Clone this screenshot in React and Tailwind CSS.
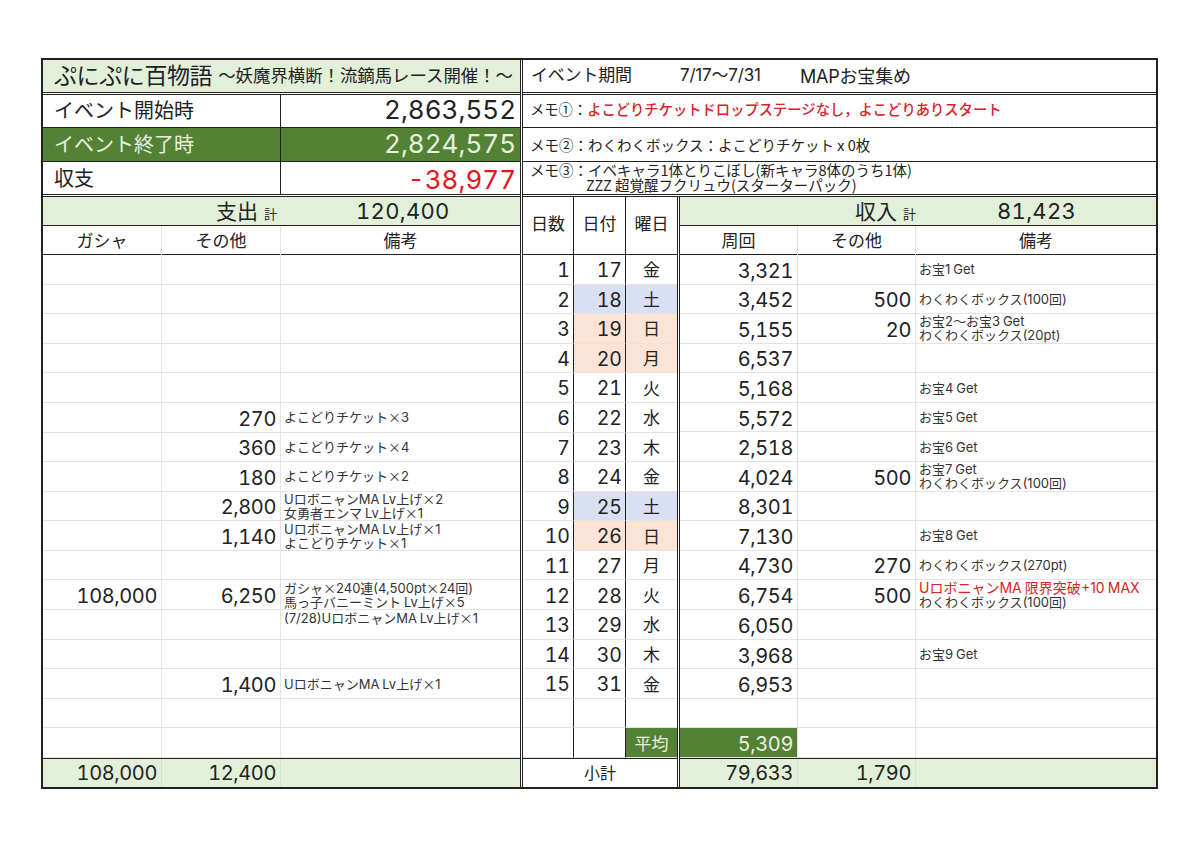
const font = { fontFamily: '"Inter", "Noto Sans CJK JP", sans-serif' };
const cjk = { fontFamily: '"Noto Sans CJK JP", "Inter", sans-serif' };

const leftRows = [
  {}, {}, {}, {}, {},
  { other: "270", note: "よこどりチケット×3" },
  { other: "360", note: "よこどりチケット×4" },
  { other: "180", note: "よこどりチケット×2" },
  { other: "2,800", note: ["UロボニャンMA Lv上げ×2", "女勇者エンマ Lv上げ×1"] },
  { other: "1,140", note: ["UロボニャンMA Lv上げ×1", "よこどりチケット×1"] },
  {},
  { gacha: "108,000", other: "6,250", note: ["ガシャ×240連(4,500pt×24回)", "馬っ子バニーミント Lv上げ×5"] },
  { note: "(7/28)UロボニャンMA Lv上げ×1", top: true },
  {},
  { other: "1,400", note: "UロボニャンMA Lv上げ×1" },
  {},
  {},
];

const days = [
  ["1", "17", "金"],
  ["2", "18", "土", "sat"],
  ["3", "19", "日", "sun"],
  ["4", "20", "月", "sun"],
  ["5", "21", "火"],
  ["6", "22", "水"],
  ["7", "23", "木"],
  ["8", "24", "金"],
  ["9", "25", "土", "sat"],
  ["10", "26", "日", "sun"],
  ["11", "27", "月"],
  ["12", "28", "火"],
  ["13", "29", "水"],
  ["14", "30", "木"],
  ["15", "31", "金"],
  ["", "", ""],
  ["", "", "平均", "avg"],
];

const rightRows = [
  { laps: "3,321", note: "お宝1 Get" },
  { laps: "3,452", other: "500", note: "わくわくボックス(100回)" },
  { laps: "5,155", other: "20", note: ["お宝2〜お宝3 Get", "わくわくボックス(20pt)"] },
  { laps: "6,537" },
  { laps: "5,168", note: "お宝4 Get" },
  { laps: "5,572", note: "お宝5 Get" },
  { laps: "2,518", note: "お宝6 Get" },
  { laps: "4,024", other: "500", note: ["お宝7 Get", "わくわくボックス(100回)"] },
  { laps: "8,301" },
  { laps: "7,130", note: "お宝8 Get" },
  { laps: "4,730", other: "270", note: "わくわくボックス(270pt)" },
  { laps: "6,754", other: "500", note: ["UロボニャンMA 限界突破+10 MAX", "わくわくボックス(100回)"], red: true },
  { laps: "6,050" },
  { laps: "3,968", note: "お宝9 Get" },
  { laps: "6,953" },
  {},
  { laps: "5,309", avg: true },
];

// latin runs get the wider face, kana and the full-width × stay in the CJK one
const Mixed = ({ text }) =>
  text.split(/([A-Za-z0-9,+/().]+)/).map((part, i) =>
    i % 2 ? <span key={i} style={font}>{part}</span> : part
  );

const Num = ({ children, className = "" }) => (
  <div className={`flex items-center justify-end pr-[4px] pt-[3px] text-[20px] leading-none tabular-nums tracking-[-0.4px] border-r border-b border-[#e4e4e4] ${className}`}>
    {children}
  </div>
);

const Note = ({ note, top, red }) => {
  const lines = Array.isArray(note) ? note : note ? [note] : [];
  return (
    <div
      className={`flex flex-col pl-[3px] border-b border-[#e4e4e4] text-[13px] leading-[14px] text-[#333] ${top ? "justify-start pt-[1px]" : "justify-center"}`}
      style={cjk}
    >
      {lines.map((l, i) => (
        <div key={i} className={`whitespace-nowrap ${red && i === 0 ? "text-[#d9222a] text-[14px]" : ""}`}>
          <Mixed text={l} />
        </div>
      ))}
    </div>
  );
};

const dayBg = { sat: "bg-[#d9e0f2]", sun: "bg-[#fbe4d5]", avg: "bg-[#548235] text-[#e8f0e0]" };

const bigNum = "flex items-center justify-end pr-[4px] pb-[2px] text-[26px] leading-none tabular-nums";
const bigLabel = "flex items-center pl-[11px] text-[20px] leading-none border-r border-[#222]";

export default function App() {
  return (
    <div className="w-[1200px] h-[848px] bg-white pt-[58px] pl-[41px] text-[#222]" style={font}>
      <div className="w-[1117px] h-[731px] border-2 border-[#222] flex">
        {/* left half */}
        <div className="w-[477px] flex flex-col">
          <div className="h-[32px] bg-[#e2efd9] flex items-center pl-[11px] whitespace-nowrap">
            <span className="text-[23px] tracking-[-0.4px]">ぷにぷに百物語</span>
            <span className="text-[17.4px] ml-[6px]">〜妖魔界横断！流鏑馬レース開催！〜</span>
          </div>
          <div className="h-[3px] border-y border-[#222]" />
          <div className="h-[33px] grid grid-cols-[238px_1fr] border-b border-[#222]">
            <div className={bigLabel}>イベント開始時</div>
            <div className={bigNum}>2,863,552</div>
          </div>
          <div className="h-[34px] grid grid-cols-[238px_1fr] border-b border-[#222] bg-[#548235] text-[#e8f0e0]">
            <div className={bigLabel}>イベント終了時</div>
            <div className={bigNum}>2,824,575</div>
          </div>
          <div className="h-[32px] grid grid-cols-[238px_1fr]">
            <div className={`${bigLabel} pt-[2px]`}>収支</div>
            <div className="flex items-center justify-end pr-[4px] pt-[3px] text-[26px] leading-none tabular-nums text-[#e8141c]">-38,977</div>
          </div>
          <div className="h-[3px] border-y border-[#222]" />
          <div className="h-[29px] bg-[#e2efd9] border-b border-[#222] grid grid-cols-[238px_1fr] items-center">
            <div className="text-right pr-[4px] text-[21px] leading-none">支出 <span className="text-[13px]">計</span></div>
            <div className="pl-[75px] text-[22px] leading-none tabular-nums tracking-[0.3px]">120,400</div>
          </div>
          <div className="h-[29px] grid grid-cols-[119px_119px_1fr] border-b border-[#222] text-[17px] text-center">
            <div className="border-r border-[#e4e4e4] flex items-center justify-center pt-[3px]">ガシャ</div>
            <div className="border-r border-[#e4e4e4] flex items-center justify-center pt-[3px]">その他</div>
            <div className="flex items-center justify-center pt-[3px]">備考</div>
          </div>
          <div className="h-[503px] grid grid-cols-[119px_119px_1fr] grid-rows-[repeat(17,1fr)]">
            {leftRows.map((r, i) => [
              <Num key={`g${i}`}>{r.gacha}</Num>,
              <Num key={`o${i}`}>{r.other}</Num>,
              <Note key={`n${i}`} note={r.note} top={r.top} />,
            ])}
          </div>
          <div className="h-[29px] grid grid-cols-[119px_119px_1fr] bg-[#e2efd9] border-t border-[#222] text-[20px] leading-none tabular-nums tracking-[-0.4px]">
            <div className="flex items-center justify-end pr-[4px] border-r border-[#d5e2cc]">108,000</div>
            <div className="flex items-center justify-end pr-[4px] border-r border-[#d5e2cc]">12,400</div>
            <div />
          </div>
        </div>

        <div className="w-[3px] border-x border-[#222]" />

        {/* right half */}
        <div className="flex-1 flex flex-col">
          <div className="h-[32px] flex items-center pl-[8px] whitespace-nowrap text-[17px] tracking-[-0.2px]">
            <span className="w-[149px]">イベント期間</span>
            <span className="w-[120px]">7/17〜7/31</span>
            <span className="text-[18px]">MAPお宝集め</span>
          </div>
          <div className="h-[3px] border-y border-[#222]" />
          <div className="h-[33px] border-b border-[#222] flex items-center pl-[7px] pb-[4px] text-[14.3px] whitespace-nowrap" style={cjk}>
            メモ①：<span className="text-[#d9222a] font-medium">よこどりチケットドロップステージなし，よこどりありスタート</span>
          </div>
          <div className="h-[34px] border-b border-[#222] flex items-center pl-[7px] text-[14.5px] whitespace-nowrap" style={cjk}>
            メモ②：わくわくボックス：よこどりチケット x 0枚
          </div>
          <div className="h-[32px] pl-[7px] text-[14.5px] leading-[15px] whitespace-nowrap" style={cjk}>
            <div>メモ③：イベキャラ1体とりこぼし(新キャラ8体のうち1体)</div>
            <div className="pl-[56px]">ZZZ 超覚醒フクリュウ(スターターパック)</div>
          </div>
          <div className="h-[3px] border-y border-[#222]" />

          <div className="flex-1 flex">
            {/* days */}
            <div className="w-[154px] flex flex-col">
              <div className="h-[58px] grid grid-cols-[51px_52px_1fr] border-b border-[#222] text-[17px]">
                <div className="flex items-center justify-center pb-[2px] border-r border-[#222]">日数</div>
                <div className="flex items-center justify-center pb-[2px] border-r border-[#222]">日付</div>
                <div className="flex items-center justify-center pb-[2px]">曜日</div>
              </div>
              <div className="h-[503px] grid grid-cols-[51px_52px_1fr] grid-rows-[repeat(17,1fr)] text-[19.5px] leading-none tabular-nums">
                {days.map(([n, d, w, k], i) => [
                  <div key={`a${i}`} className="flex items-center justify-end pr-[3px] pt-[3px] border-r border-b border-r-[#222] border-b-[#e4e4e4]">{n}</div>,
                  <div key={`b${i}`} className={`flex items-center justify-end pr-[3px] pt-[3px] border-r border-b border-r-[#222] border-b-[#e4e4e4] ${k === "avg" ? "" : dayBg[k] || ""}`}>{d}</div>,
                  <div key={`c${i}`} className={`flex items-center justify-center pt-[3px] border-b border-[#e4e4e4] text-[17px] ${dayBg[k] || ""}`}>{w}</div>,
                ])}
              </div>
              <div className="h-[29px] border-t border-[#222] flex items-center justify-center text-[16px]">小計</div>
            </div>

            <div className="w-[3px] border-x border-[#222]" />

            {/* income */}
            <div className="flex-1 flex flex-col">
              <div className="h-[29px] bg-[#e2efd9] border-b border-[#222] grid grid-cols-[236px_1fr] items-center">
                <div className="text-right text-[21px] leading-none">収入 <span className="text-[13px]">計</span></div>
                <div className="pl-[81px] text-[22px] leading-none tabular-nums tracking-[0.3px]">81,423</div>
              </div>
              <div className="h-[29px] grid grid-cols-[118px_118px_1fr] border-b border-[#222] text-[17px] text-center">
                <div className="border-r border-[#e4e4e4] flex items-center justify-center pt-[3px]">周回</div>
                <div className="border-r border-[#e4e4e4] flex items-center justify-center pt-[3px]">その他</div>
                <div className="flex items-center justify-center pt-[3px]">備考</div>
              </div>
              <div className="h-[503px] grid grid-cols-[118px_118px_1fr] grid-rows-[repeat(17,1fr)]">
                {rightRows.map((r, i) => [
                  <Num key={`l${i}`} className={r.avg ? "bg-[#548235] text-[#e8f0e0]" : ""}>{r.laps}</Num>,
                  <Num key={`o${i}`}>{r.other}</Num>,
                  <Note key={`n${i}`} note={r.note} red={r.red} />,
                ])}
              </div>
              <div className="h-[29px] grid grid-cols-[118px_118px_1fr] bg-[#e2efd9] border-t border-[#222] text-[20px] leading-none tabular-nums tracking-[-0.4px]">
                <div className="flex items-center justify-end pr-[4px] border-r border-[#d5e2cc]">79,633</div>
                <div className="flex items-center justify-end pr-[4px] border-r border-[#d5e2cc]">1,790</div>
                <div />
              </div>
            </div>
          </div>
        </div>
      </div>
    </div>
  );
}
